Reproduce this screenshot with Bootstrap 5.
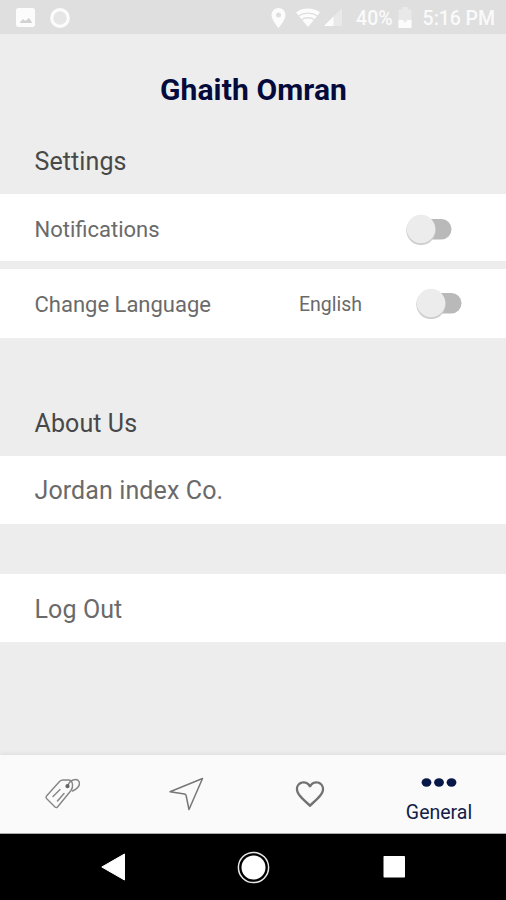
<!DOCTYPE html>
<html lang="en">
<head>
<meta charset="utf-8">
<meta name="viewport" content="width=device-width, initial-scale=1">
<title>General</title>
<link href="https://cdn.jsdelivr.net/npm/bootstrap@5.3.0/dist/css/bootstrap.min.css" rel="stylesheet">
<style>
body{font-family:Roboto,"Liberation Sans",sans-serif;background:#ededed;color:#6a6a6a;height:900px;overflow:hidden;line-height:1}
svg{display:block;flex:none}
.status-bar{height:34px;background:#dfdfdf;color:#fafafa;font-size:19.500px;font-weight:500;padding:1px 11px 0 16px}
.record{margin-left:15px}
.location{margin-right:-1px}
.signal{margin-left:-9px}
.battery-text{margin-left:13px;padding-top:2px}
.battery{margin:0 11px 0 5px}
.clock{padding-top:2px;letter-spacing:-.05px}
.user-name{height:160px}
.user-name h1{font-size:30px;font-weight:700;color:#040a3c;padding-top:38px;padding-left:1px;letter-spacing:.12px}
.section-title{font-size:25px;font-weight:400;color:#484848;padding-left:34.500px;letter-spacing:.1px}
.user-name .section-title{padding-top:39px}
.setting-row{background:#fff;padding-left:34.500px;font-size:22px}
.big-text{font-size:25px;letter-spacing:.11px}
.lang-value{font-size:19.500px}
.toggle{width:46px;height:32px}
.first-row{height:67px;padding-right:54px;padding-top:5px}
.second-row{height:69px;margin-top:8px;padding-right:44.500px;padding-top:3px}
.second-row .toggle{margin:-3px 0 0 53.500px}
.about-title{height:118px;padding-top:71px}
.company-row{height:67.500px;padding-top:1px}
.logout-row{height:68px;margin-top:50px;padding-top:4px}
.tab-bar{height:79px;background:#fafafa;box-shadow:0 -2px 3px rgba(0,0,0,.05);border-bottom:1px solid #aaa}
.tab-item{width:124px}
.tab-last{padding-top:23px}
.tab-label{font-size:19.500px;color:#141c48;margin-top:15px}
.system-nav{height:66px;background:#000;padding:0 101px}
.home{margin-left:-1px}
</style>
<script src="https://cdn.jsdelivr.net/npm/bootstrap@5.3.0/dist/js/bootstrap.bundle.min.js"></script>
</head>
<body class="d-flex flex-column">
<header class="status-bar d-flex align-items-center flex-shrink-0">
  <svg width="19" height="19" viewBox="0 0 19 19"><rect width="19" height="19" rx="2.500" fill="#fcfcfc"/><path d="M3.500 15 7 11l2.500 2 3.500-3 3.500 5z" fill="#d2d2d2"/></svg>
  <svg class="record" width="20" height="20" viewBox="0 0 20 20"><circle cx="10" cy="10" r="8.300" fill="#e6e6e6" stroke="#fcfcfc" stroke-width="3.200"/></svg>
  <svg class="location ms-auto" width="15" height="20" viewBox="0 0 15 20"><path d="M7.500 0A7 7 0 0 0 .5 7c0 5 7 13 7 13s7-8 7-13a7 7 0 0 0-7-7z" fill="#fcfcfc"/><circle cx="7.500" cy="7" r="2.500" fill="#dfdfdf"/></svg>
  <svg width="48" height="22" viewBox="0 0 48 22"><path d="M11 5.500C15 2 19 1.500 23 1.500S31 2.500 35 5.500L23 20z" fill="#fcfcfc"/><path d="M13 9.200c6-4 14-4 20 0M16 13c4-3 10-3 14 0" fill="none" stroke="#dfdfdf" stroke-width="1.300"/></svg>
  <svg class="signal" width="19" height="19" viewBox="0 0 19 19"><path d="M0 18 18 0v18z" fill="#e9e9e9"/><path d="M0 18 9.500 8.500V18z" fill="#fcfcfc"/></svg>
  <span class="battery-text">40%</span>
  <svg class="battery" width="14" height="21" viewBox="0 0 14 21"><path d="M4 0h6v2.500h3.500V21H.5V2.500H4z" fill="#e9e9e9"/><path d="M.5 13h4.500l2 3 2.500-3h4V20a1 1 0 0 1-1 1H1.500a1 1 0 0 1-1-1z" fill="#fcfcfc"/></svg>
  <span class="clock">5:16 PM</span>
</header>
<main class="flex-grow-1">
  <div class="user-name text-center">
    <h1 class="m-0">Ghaith Omran</h1>
    <h2 class="section-title text-start m-0">Settings</h2>
  </div>
  <div class="setting-row first-row d-flex align-items-center">
    <span>Notifications</span>
    <svg class="toggle ms-auto" viewBox="0 0 46 32"><rect x="12" y="5" width="33.500" height="20.500" rx="10" fill="#b9b9b9"/><circle cx="15" cy="16.300" r="14.700" fill="#ccc"/><circle cx="15" cy="15" r="14.300" fill="#ececec"/></svg>
  </div>
  <div class="setting-row second-row d-flex align-items-center">
    <span>Change Language</span>
    <span class="lang-value ms-auto">English</span>
    <svg class="toggle" viewBox="0 0 46 32"><rect x="12" y="5" width="33.500" height="20.500" rx="10" fill="#b9b9b9"/><circle cx="15" cy="16.300" r="14.700" fill="#ccc"/><circle cx="15" cy="15" r="14.300" fill="#ececec"/></svg>
  </div>
  <h2 class="section-title about-title m-0">About Us</h2>
  <div class="setting-row company-row big-text d-flex align-items-center"><span>Jordan index Co.</span></div>
  <div class="setting-row logout-row big-text d-flex align-items-center"><span>Log Out</span></div>
</main>
<nav class="tab-bar d-flex flex-shrink-0">
  <a class="tab-item d-flex justify-content-center align-items-center" href="#" aria-label="Offers"><svg width="36" height="32" viewBox="44 778 36 32" fill="none" stroke="#858585" stroke-width="1.400" stroke-linejoin="round" stroke-linecap="round"><path d="M46.500 796 59.500 781.500q1.500-1.500 3.500-1.500h6q3 .5 3.500 4.500.5 3.500-1.500 6L57.500 807q-1.200 1.200-2.500 0l-8.500-8.500q-1-1.200 0-2.500z"/><path d="M68 786c1-6.500 9-8 11-4.500 1.500 4-2 7.500-6.500 9.500M53 796.500l7-7M57.500 801l6.500-7.500"/><circle cx="67.500" cy="786.200" r="1.400" fill="#666" stroke="#666"/></svg></a>
  <a class="tab-item d-flex justify-content-center align-items-center" href="#" aria-label="Nearby"><svg width="36" height="34" viewBox="168 776.500 36 34" fill="none" stroke="#777" stroke-width="1.500" stroke-linejoin="round"><path d="M202.500 778 170 791.200l14.500 2.300q1.500.3 1.700 2L189 809z"/></svg></a>
  <a class="tab-item d-flex justify-content-center align-items-center" href="#" aria-label="Favourites"><svg width="34" height="34" viewBox="0 0 24 24" fill="#727272"><path d="M16.500 3c-1.740 0-3.410.81-4.500 2.090C10.910 3.810 9.240 3 7.500 3 4.420 3 2 5.420 2 8.500c0 3.780 3.400 6.860 8.550 11.540L12 21.350l1.450-1.320C18.600 15.360 22 12.280 22 8.500 22 5.420 19.580 3 16.500 3zm-4.400 15.900l-.1.100-.1-.1C7 14.500 3.600 11.500 3.600 8.500 3.600 6.200 5.300 4.600 7.500 4.600c1.700 0 3.200 1.100 3.800 2.600h1.400c.6-1.500 2.100-2.600 3.800-2.600 2.200 0 3.900 1.600 3.900 3.900 0 3-3.400 6-8.300 10.400z"/></svg></a>
  <a class="tab-last d-flex flex-column flex-grow-1 align-items-center text-decoration-none" href="#"><svg width="36" height="10" viewBox="0 0 36 10" fill="#071747"><ellipse cx="5.500" cy="4.500" rx="4.900" ry="4.200"/><ellipse cx="18" cy="4.500" rx="4.900" ry="4.200"/><ellipse cx="30.500" cy="4.500" rx="4.900" ry="4.200"/></svg><span class="tab-label">General</span></a>
</nav>
<footer class="system-nav d-flex justify-content-between align-items-center flex-shrink-0">
  <svg width="24" height="28" viewBox="0 0 24 28"><path d="M.8 14 23.500 1v26z" fill="#fff" stroke="#fff" stroke-linejoin="round"/></svg>
  <svg class="home" width="33" height="33" viewBox="0 0 33 33"><circle cx="16.500" cy="16.500" r="15.100" fill="none" stroke="#e8e8e8" stroke-width="1.500"/><circle cx="16.500" cy="16.500" r="12" fill="#fff"/></svg>
  <svg width="22" height="22" viewBox="0 0 22 22"><rect x=".5" width="21.500" height="21.500" rx=".8" fill="#fff"/></svg>
</footer>
</body>
</html>
